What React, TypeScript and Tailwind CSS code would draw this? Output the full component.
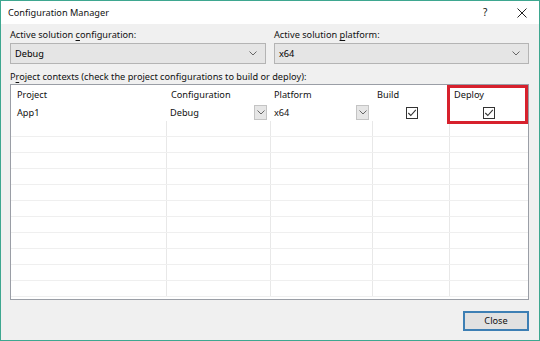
import React from "react";

const font = { fontFamily: '"Noto Sans", "Liberation Sans", sans-serif' };

function Chevron({ className = "" }: { className?: string }) {
  return (
    <svg width="8" height="5" viewBox="0 0 8 5" className={className}>
      <path d="M0.5 0.5 L4 4 L7.5 0.5" fill="none" stroke="#666" strokeWidth="1" />
    </svg>
  );
}

function Dropdown({ value }: { value: string }) {
  return (
    <div className="h-[21px] mt-[1px] border border-[#b4b4b4] bg-[#e5e5e5] flex items-center pl-[4px] pr-[8px]">
      <span className="flex-1 text-[9.2px] leading-none text-black">{value}</span>
      <Chevron />
    </div>
  );
}

function CellSelect({ value }: { value: string }) {
  return (
    <div className="flex items-center h-full pl-[3px] pr-[4px]">
      <span className="flex-1 text-[9.2px] leading-none">{value}</span>
      <div className="w-[13px] h-[15px] border border-[#c4c4c4] bg-[#e6e6e6] flex items-center justify-center">
        <Chevron />
      </div>
    </div>
  );
}

function Check() {
  return (
    <svg width="12" height="12" viewBox="0 0 12 12">
      <rect x="0.5" y="0.5" width="11" height="11" fill="#fff" stroke="#333" />
      <path d="M2.3 6 L4.8 8.5 L9.8 2.8" fill="none" stroke="#333" strokeWidth="1.1" />
    </svg>
  );
}

const cols = [
  { name: "Project", w: "w-[156px] pl-[6px]" },
  { name: "Configuration", w: "w-[104px] pl-[4px]" },
  { name: "Platform", w: "w-[102px] pl-[3px]" },
  { name: "Build", w: "w-[77px] pl-[4px]" },
  { name: "Deploy", w: "flex-1 pl-[4px]" },
];

export default function App() {
  const emptyRows = Array.from({ length: 11 });
  return (
    <div
      style={font}
      className="w-[540px] h-[341px] border border-[#3ea790] bg-[#f0f0f0] flex flex-col text-[#111] overflow-hidden"
    >
      {/* title bar */}
      <div className="h-[23px] bg-white flex items-center pl-[7px] shrink-0">
        <span className="flex-1 text-[9.2px]">Configuration Manager</span>
        <span className="text-[10px] w-[10px] mr-[24px]">?</span>
        <svg width="10" height="10" viewBox="0 0 10 10" className="mr-[12px]">
          <path d="M0.5 0.5 L9.5 9.5 M9.5 0.5 L0.5 9.5" stroke="#222" strokeWidth="1" />
        </svg>
      </div>

      <div className="flex-1 flex flex-col pl-[9px] pr-[10px]">
        <div className="flex gap-[8px] pt-[3px]">
          <div className="w-[256px]">
            <div className="text-[9.2px] leading-[15px]">
              Active solution <span className="underline underline-offset-2">c</span>onfiguration:
            </div>
            <Dropdown value="Debug" />
          </div>
          <div className="flex-1">
            <div className="text-[9.2px] leading-[15px]">
              Active solution <span className="underline underline-offset-2">p</span>latform:
            </div>
            <Dropdown value="x64" />
          </div>
        </div>

        <div className="text-[9.2px] leading-[15px] mt-[5px]">
          P<span className="underline underline-offset-2">r</span>oject contexts (check the project configurations to build or deploy):
        </div>

        <div className="h-[216px] border border-[#9a9ea6] bg-white relative flex flex-col">
          {/* header */}
          <div className="flex h-[19px] text-[9.2px] items-center">
            {cols.map((c) => (
              <div key={c.name} className={c.w}>
                {c.name}
              </div>
            ))}
          </div>
          {/* app row */}
          <div className="flex h-[17px] text-[9.2px]">
            <div className="w-[156px] pl-[6px] flex items-center">App1</div>
            <div className="w-[104px]">
              <CellSelect value="Debug" />
            </div>
            <div className="w-[102px]">
              <CellSelect value="x64" />
            </div>
            <div className="w-[77px] flex items-center justify-center">
              <Check />
            </div>
            <div className="flex-1 flex items-center justify-center">
              <Check />
            </div>
          </div>
          {/* empty rows */}
          <div className="flex-1 flex flex-col overflow-hidden">
            {emptyRows.map((_, i) => (
              <div key={i} className="flex h-[16px] shrink-0 border-b border-[#efefef]">
                <div className="w-[156px] border-r border-[#e8e8e8]" />
                <div className="w-[104px] border-r border-[#e8e8e8]" />
                <div className="w-[102px] border-r border-[#e8e8e8]" />
                <div className="w-[77px] border-r border-[#e8e8e8]" />
                <div className="flex-1" />
              </div>
            ))}
          </div>
          {/* highlight */}
          <div className="absolute left-[436px] top-[0px] w-[81px] h-[39px] border-[3px] border-[#d7212d]" />
        </div>

        <div className="flex justify-end mt-[11px]">
          <button className="w-[66px] h-[20px] border-2 border-[#3d7fb4] bg-[#e1e1e1] text-[9.2px] leading-none flex items-center justify-center">
            Close
          </button>
        </div>
      </div>
    </div>
  );
}
